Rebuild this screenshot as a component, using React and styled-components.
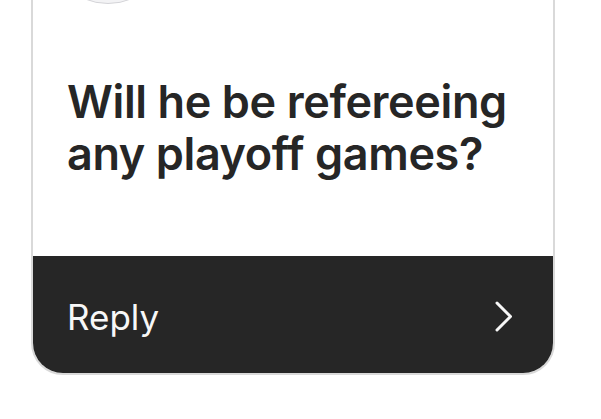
import React from "react";
import styled, { createGlobalStyle } from "styled-components";

const Global = createGlobalStyle`
  html, body {
    margin: 0;
    padding: 0;
    background: #ffffff;
  }
  body {
    font-family: Inter, "Noto Sans", sans-serif;
    overflow: hidden;
  }
`;

const Page = styled.div`
  width: 601px;
  height: 419px;
  overflow: hidden;
  padding-left: 31px;
  box-sizing: border-box;
  background: #ffffff;
`;

const Card = styled.div`
  width: 524px;
  box-sizing: border-box;
  margin-top: -160px;
  border: 2px solid #d9d9d9;
  border-radius: 32px;
  overflow: hidden;
  background: #ffffff;
  display: flex;
  flex-direction: column;
`;

const Header = styled.div`
  display: flex;
  padding: 38px 0 0 13px;
  height: 126px;
`;

const Avatar = styled.div`
  width: 124px;
  height: 124px;
  border-radius: 50%;
  background: #f3f3f5;
  border: 1.5px solid #d4d4d8;
  box-sizing: border-box;
`;

const Question = styled.p`
  margin: 0;
  padding: 70px 20px 76px 34px;
  font-family: Inter, "Noto Sans", sans-serif;
  font-weight: 600;
  font-size: 45px;
  line-height: 52px;
  letter-spacing: -0.4px;
  color: #262626;
`;

const Footer = styled.button`
  all: unset;
  display: flex;
  align-items: center;
  justify-content: space-between;
  height: 117px;
  padding: 0 40px 0 34px;
  background: #262626;
  color: #ffffff;
  cursor: pointer;
`;

const ReplyLabel = styled.span`
  font-family: Inter, "Noto Sans", sans-serif;
  font-weight: 400;
  font-size: 35px;
  letter-spacing: 0;
  color: #f7f7f7;
  margin-top: 4px;
`;

const Chevron = styled.svg`
  width: 18px;
  height: 31px;
  margin-top: 4px;
`;

export default function App() {
  return (
    <>
      <Global />
      <Page>
        <Card>
          <Header>
            <Avatar />
          </Header>
          <Question>Will he be refereeing any playoff games?</Question>
          <Footer>
            <ReplyLabel>Reply</ReplyLabel>
            <Chevron viewBox="0 0 18 31" fill="none">
              <path
                d="M2 2 L15.5 15.5 L2 29"
                stroke="#f7f7f7"
                strokeWidth="3"
                strokeLinecap="round"
                strokeLinejoin="round"
              />
            </Chevron>
          </Footer>
        </Card>
      </Page>
    </>
  );
}
